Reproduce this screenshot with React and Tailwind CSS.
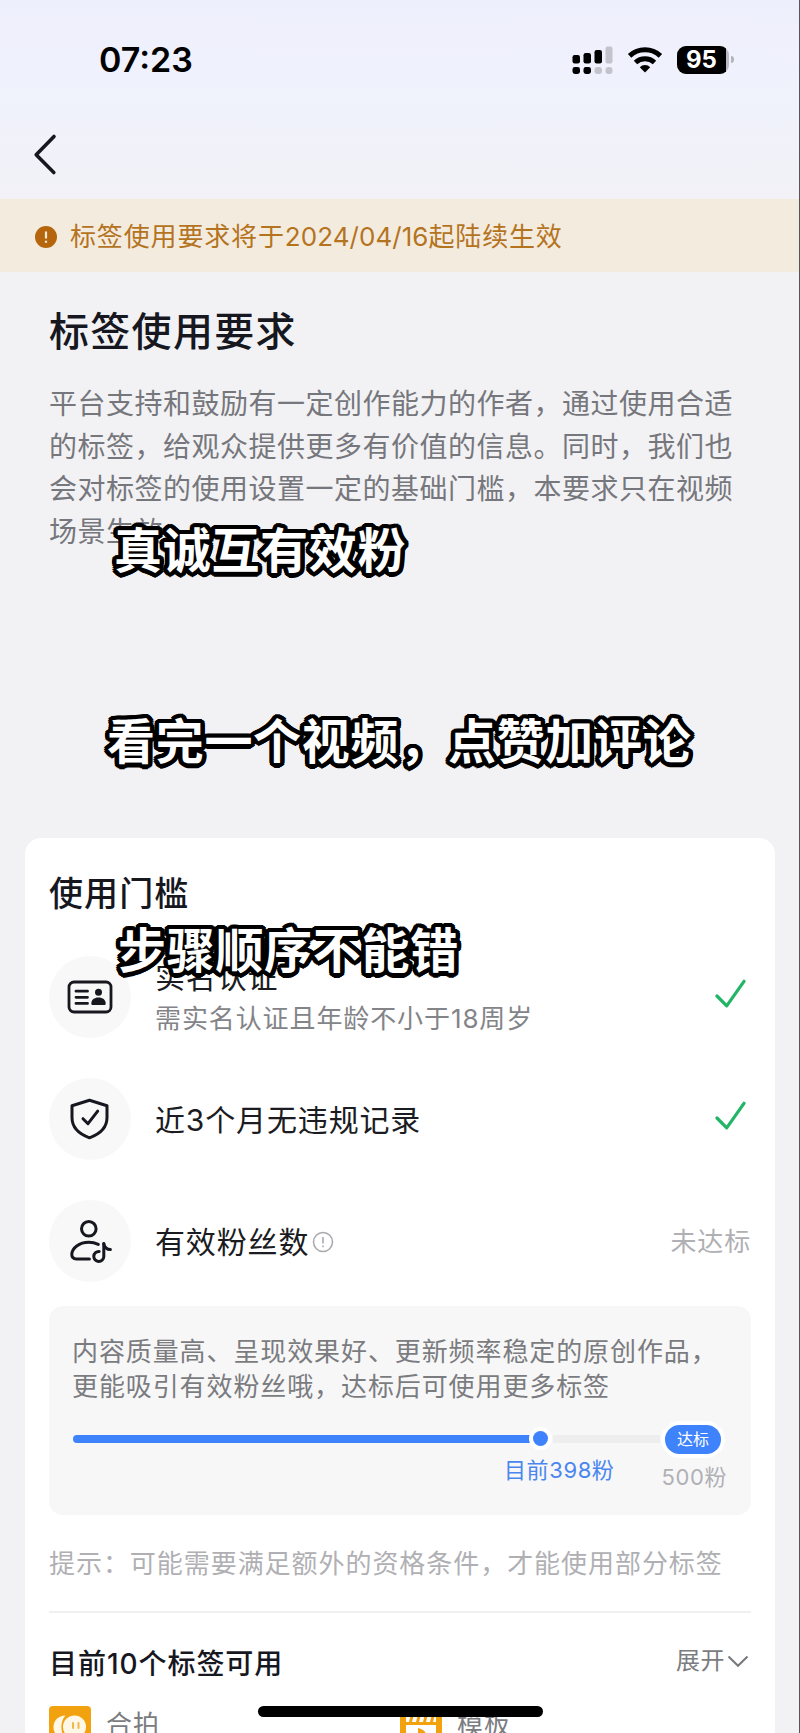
import React from "react";

function CellularIcon() {
  return (
    <svg width="41" height="28" viewBox="0 0 41 28" fill="#000">
      <rect x="0.500" y="9" width="7.500" height="8.500" rx="2.200" />
      <rect x="11.500" y="7" width="7.500" height="10.500" rx="2.200" />
      <rect x="22.500" y="4" width="7.500" height="13.500" rx="2.200" />
      <rect x="33.500" y="0.500" width="7" height="17" rx="2" fill="#c3c4cb" />
      <rect x="0.500" y="21" width="7.500" height="7" rx="2.400" />
      <rect x="11.500" y="21" width="7.500" height="7" rx="2.400" />
      <rect x="22.500" y="21" width="7.500" height="7" rx="3" fill="#c3c4cb" />
      <rect x="33.500" y="21" width="7" height="7" rx="3" fill="#c3c4cb" />
    </svg>
  );
}

function WifiIcon() {
  return (
    <svg width="36" height="26" viewBox="0 0 36 26" fill="none" stroke="#000" strokeWidth="5">
      <path d="M2.600 8.900a22.500 22.500 0 0 1 30.800 0" />
      <path d="M8.500 15.500a14 14 0 0 1 19 0" />
      <path d="M18 25.400l-5.200-5.200a7.400 7.400 0 0 1 10.400 0z" fill="#000" stroke="none" />
    </svg>
  );
}

function Battery() {
  return (
    <div className="flex items-center gap-[2px]">
      <div className="flex h-7 w-[52px] items-center overflow-hidden rounded-[9px] bg-[#b9bac2]">
        <div className="flex h-7 w-[49px] items-center justify-center bg-black text-[24px] font-bold leading-7 text-white">95</div>
      </div>
      <div className="h-[7px] w-[3px] rounded-r-full bg-[#b4b5bc]" />
    </div>
  );
}

function IdCardIcon() {
  return (
    <svg width="46" height="34" viewBox="0 0 46 34" fill="none" stroke="#16171f" strokeLinecap="round">
      <rect x="2" y="2" width="42" height="30" rx="5" strokeWidth="2.800" />
      <path d="M9 11.200h11.500M9 17.300h11.500M9 23.400h11.500" strokeWidth="2.800" />
      <circle cx="31.500" cy="12.300" r="3.500" fill="#16171f" stroke="none" />
      <path d="M24.300 23.400c0-3.800 3-6 7.200-6s7.200 2.200 7.200 6c0 1-.6 1.600-1.600 1.600H25.900c-1 0-1.600-.6-1.600-1.600z" fill="#16171f" stroke="none" />
    </svg>
  );
}

function ShieldIcon() {
  return (
    <svg width="39" height="42" viewBox="0 0 39 42" fill="none" stroke="#16171f" strokeWidth="3" strokeLinecap="round" strokeLinejoin="round">
      <path d="M19.500 2.200L37 7.800V19.500c0 9.500-7 16.500-17.500 20.300C9 36 2 29 2 19.500V7.800z" />
      <path d="M13 20.700l5 5 9.700-12.500" />
    </svg>
  );
}

function FansIcon() {
  return (
    <svg className="ml-[2px]" width="42" height="44" viewBox="0 0 42 44" fill="none" stroke="#16171f" strokeWidth="3" strokeLinecap="round" strokeLinejoin="round">
      <circle cx="18.800" cy="9.800" r="7.300" />
      <path d="M28.300 25.400c-3-1.400-6-2.100-9.500-2.100-9.500 0-17 5.600-17 12.300 0 2.900 1.800 4.300 4.600 4.300h13" />
      <path d="M33.800 24.500v13.200a5 5 0 1 1-4.600-5.200" />
      <path d="M33.800 24.800c.8 3.600 3.200 5.600 6.600 5.800" />
    </svg>
  );
}

function Check() {
  return (
    <svg className="mb-[6px] mr-[4px]" width="32" height="30" viewBox="0 0 32 30" fill="none" stroke="#22b566" strokeWidth="3.200" strokeLinecap="round" strokeLinejoin="round">
      <path d="M2 17l9.700 9.800L29 2.300" />
    </svg>
  );
}

function DuetIcon() {
  return (
    <svg width="42" height="42" viewBox="0 0 42 42">
      <rect width="42" height="42" rx="4" fill="#f3a20f" />
      <path d="M16.500 9.500c-7 0-12 5-12 11.500s5 11.500 12 11.500c-5.500-5.500-5.500-17.500 0-23z" fill="#fff8e6" />
      <circle cx="25.500" cy="21" r="11.500" fill="#fff8e6" />
      <path d="M24 17v5M29.500 17v5" stroke="#f3b64a" strokeWidth="2" strokeLinecap="round" />
    </svg>
  );
}

function TemplateIcon() {
  return (
    <svg width="42" height="42" viewBox="0 0 42 42">
      <rect width="42" height="42" rx="4" fill="#f3a20f" />
      <path d="M6 7h30v10H6z" fill="#fff" />
      <path d="M13 6l-3 12M20 6l-3 12M27 6l-3 12M34 6l-3 12M5 17.500h32" stroke="#f3a20f" strokeWidth="3" />
      <rect x="6" y="19" width="30" height="20" fill="#fff" />
      <path d="M18 22c4 1 8 3 8 7H18z" fill="#f3a20f" />
    </svg>
  );
}

function Requirement({ icon, title, sub, info, status }) {
  return (
    <div className="flex h-[82px] items-center">
      <div className="flex size-[82px] shrink-0 items-center justify-center rounded-full bg-[#f8f8f9] pr-[1px]">{icon}</div>
      <div className="ml-6 grow pt-[2px]">
        <div className="flex items-center gap-[3px] text-[30px] leading-[42px] tracking-[0.850px] text-[#1b1c22]">
          {title}
          {info && (
            <svg width="22" height="22" viewBox="0 0 22 22" fill="none" stroke="#ababaf" strokeWidth="1.600">
              <circle cx="11" cy="11" r="9.500" />
              <path d="M11 6v6.500M11 14.500v1.700" />
            </svg>
          )}
        </div>
        {sub && <div className="text-[26px] leading-[42px] tracking-[0.900px] text-[#838488]">{sub}</div>}
      </div>
      {status}
    </div>
  );
}

function Caption({ className, children }) {
  return (
    <div className={`absolute whitespace-nowrap text-[48px] font-bold leading-[60px] tracking-[0.700px] text-white [text-shadow:4.5px_0_#000,4.2px_1.7px_#000,3.2px_3.2px_#000,1.7px_4.2px_#000,0_4.5px_#000,-1.7px_4.2px_#000,-3.2px_3.2px_#000,-4.2px_1.7px_#000,-4.5px_0_#000,-4.2px_-1.7px_#000,-3.2px_-3.2px_#000,-1.7px_-4.2px_#000,0_-4.5px_#000,1.7px_-4.2px_#000,3.2px_-3.2px_#000,4.2px_-1.7px_#000,2px_2px_#000,-2px_2px_#000,2px_-2px_#000,-2px_-2px_#000] ${className}`}>
      {children}
    </div>
  );
}

export default function App() {
  return (
    <div className="relative h-[1733px] w-[800px] overflow-hidden border-r border-[#55565a] bg-[#f2f2f5] font-['Inter','Noto_Sans_CJK_SC',sans-serif]">
      <header className="h-[199px] bg-linear-to-b from-[#eeeffc] via-[#f0f2fc] to-[#f2f2f7]">
        <div className="flex h-[119px] items-center justify-between pl-[99px] pr-[65px]">
          <div className="text-[34px] font-semibold leading-10">07:23</div>
          <div className="flex items-center gap-[14px]">
            <CellularIcon />
            <WifiIcon />
            <Battery />
          </div>
        </div>
        <svg className="ml-[32px] mt-[14px]" width="26" height="44" viewBox="0 0 26 44" fill="none" stroke="#16171f" strokeWidth="3.600" strokeLinecap="round" strokeLinejoin="round">
          <path d="M22 3.500L4.200 21.800 21.800 39.500" />
        </svg>
      </header>

      <div className="flex h-[73px] items-center gap-[13px] bg-[#f4ebdf] pl-[35px] pt-[2px] text-[26px] tracking-[0.850px] text-[#b4741f]">
        <svg width="22" height="22" viewBox="0 0 22 22">
          <circle cx="11" cy="11" r="11" fill="#b5660c" />
          <path d="M11 5.500v7M11 14.800v2" stroke="#f4ebdf" strokeWidth="2.200" />
        </svg>
        <div>标签使用要求将于<span className="tracking-[0.050px]">2024/04/16</span>起陆续生效</div>
      </div>

      <section className="h-[566px] pl-[49px] pt-[31px]">
        <h1 className="text-[40px] font-medium leading-[58px] tracking-[1.300px] text-[#16171f]">标签使用要求</h1>
        <p className="mt-[22px] whitespace-nowrap text-[28px] leading-[42.700px] tracking-[0.500px] text-[#76777c]">
          平台支持和鼓励有一定创作能力的作者，通过使用合适<br />
          的标签，给观众提供更多有价值的信息。同时，我们也<br />
          会对标签的使用设置一定的基础门槛，本要求只在视频<br />
          场景生效。
        </p>
      </section>

      <main className="ml-[25px] mr-[24px] h-[895px] rounded-t-[16px] bg-white px-[24px] pt-[34px]">
        <h2 className="text-[34px] font-medium leading-[44px] tracking-[1.100px] text-[#16171f]">使用门槛</h2>
        <div className="mt-[40px] flex flex-col gap-10">
          <Requirement icon={<IdCardIcon />} title="实名认证" sub="需实名认证且年龄不小于18周岁" status={<Check />} />
          <Requirement icon={<ShieldIcon />} title="近3个月无违规记录" status={<Check />} />
          <Requirement icon={<FansIcon />} title="有效粉丝数" info status={<div className="text-[26px] tracking-[0.850px] text-[#b0b0b4]">未达标</div>} />
        </div>

        <div className="mt-6 h-[209px] rounded-[14px] bg-[#f7f7f8] pl-[23px] pr-[24px] pt-[29px]">
          <p className="whitespace-nowrap text-[26px] leading-[34.500px] tracking-[0.900px] text-[#7b7c80]">
            内容质量高、呈现效果好、更新频率稳定的原创作品，<br />
            更能吸引有效粉丝哦，达标后可使用更多标签
          </p>
          <div className="mt-[16px] flex h-[38px] items-center">
            <div className="ml-[1px] h-2 w-[457px] rounded-l-full bg-[#3e83fb]" />
            <div className="mb-[1px] ml-[3px] size-[15px] rounded-full bg-[#3e83fb] ring-4 ring-white" />
            <div className="ml-[5px] h-2 w-[107px] bg-[#eeeeef]" />
            <div className="ml-[5px] flex h-[29px] w-[56px] items-center justify-center rounded-full bg-[#3e83fb] text-[16px] leading-none text-white ring-4 ring-white">达标</div>
          </div>
          <div className="flex justify-end text-[22px] leading-[24px] tracking-[0.600px]">
            <div className="text-[#4a86ef]">目前398粉</div>
            <div className="ml-[47px] mt-[7px] text-[#b0b0b4]">500粉</div>
          </div>
        </div>

        <p className="mt-[30px] whitespace-nowrap text-[26px] leading-[38px] tracking-[0.950px] text-[#b0b0b4]">提示：可能需要满足额外的资格条件，才能使用部分标签</p>
        <div className="mt-[28px] h-[2px] bg-[#f0f0f1]" />
        <div className="mt-[31px] flex h-10 items-center justify-between">
          <h3 className="text-[28px] font-medium tracking-[0.950px] text-[#16171f]">目前10个标签可用</h3>
          <div className="flex items-center gap-[2px] pb-[6px] pr-[2px] text-[24px] tracking-[0.500px] text-[#7b7c80]">
            展开
            <svg width="22" height="14" viewBox="0 0 22 14" fill="none" stroke="#77787c" strokeWidth="2">
              <path d="M1.500 2.500L11 11.800 20.500 2.500" />
            </svg>
          </div>
        </div>
        <div className="mt-[22px] grid grid-cols-2 text-[26px] leading-[38px] tracking-[0.900px] text-[#7b7c80]">
          <div className="flex gap-[15px]"><DuetIcon />合拍</div>
          <div className="flex gap-[15px]"><TemplateIcon />模板</div>
        </div>
      </main>

      <Caption className="left-[114px] top-[521px]">真诚互有效粉</Caption>
      <Caption className="left-[107px] top-[712px]">看完一个视频，点赞加评论</Caption>
      <Caption className="left-[118px] top-[921px]">步骤顺序不能错</Caption>
      <div className="absolute left-[258px] top-[1706px] h-[11px] w-[285px] rounded-full bg-black" />
    </div>
  );
}
